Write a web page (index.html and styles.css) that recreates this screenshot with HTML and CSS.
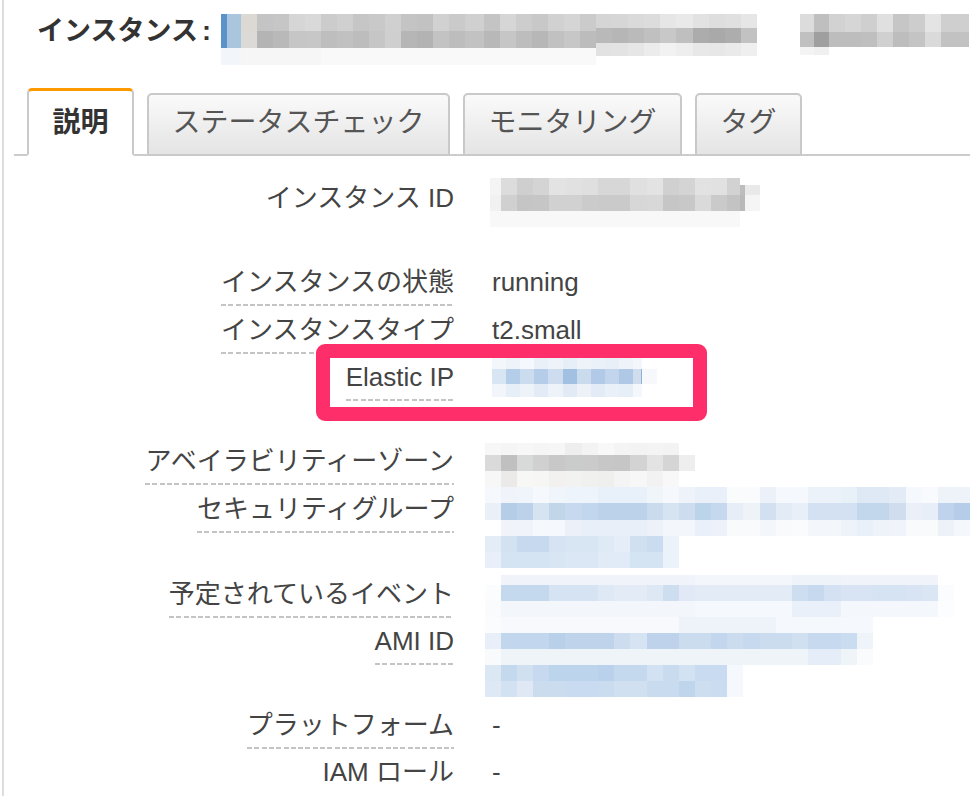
FILE: index.html
```html
<!DOCTYPE html>
<html lang="ja">
<head>
<meta charset="utf-8">
<title>インスタンス</title>
<link rel="stylesheet" href="styles.css">
</head>
<body>
<div class="page">
  <header class="title-bar">
    <h1 class="title">インスタンス<span class="colon">:</span></h1>
    <div class="mosaic m-title"></div>
  </header>
  <nav class="tabs">
    <div class="tab active">説明</div>
    <div class="tab">ステータスチェック</div>
    <div class="tab">モニタリング</div>
    <div class="tab">タグ</div>
  </nav>
  <section class="details">
    <div class="group">
      <div class="row">
        <div class="label"><span class="lbl">インスタンス ID</span></div>
        <div class="value"><div class="mosaic m-id"></div></div>
      </div>
    </div>
    <div class="group">
      <div class="row">
        <div class="label"><span class="lbl u">インスタンスの状態</span></div>
        <div class="value text">running</div>
      </div>
      <div class="row">
        <div class="label"><span class="lbl u">インスタンスタイプ</span></div>
        <div class="value text">t2.small</div>
      </div>
      <div class="row">
        <div class="label"><span class="lbl u">Elastic IP</span></div>
        <div class="value"><div class="mosaic m-eip"></div></div>
        <div class="highlight"></div>
      </div>
    </div>
    <div class="group">
      <div class="row">
        <div class="label"><span class="lbl u">アベイラビリティーゾーン</span></div>
        <div class="value"><div class="mosaic m-az"></div></div>
      </div>
      <div class="row row-sg">
        <div class="label"><span class="lbl u">セキュリティグループ</span></div>
        <div class="value"><div class="mosaic m-sg1"></div><div class="mosaic m-sg2"></div></div>
      </div>
      <div class="row">
        <div class="label"><span class="lbl u">予定されているイベント</span></div>
        <div class="value"><div class="mosaic m-ev"></div></div>
      </div>
      <div class="row row-ami">
        <div class="label"><span class="lbl u">AMI ID</span></div>
        <div class="value"><div class="mosaic m-ami1"></div><div class="mosaic m-ami2"></div></div>
      </div>
      <div class="row">
        <div class="label"><span class="lbl u">プラットフォーム</span></div>
        <div class="value text">-</div>
      </div>
      <div class="row">
        <div class="label"><span class="lbl">IAM ロール</span></div>
        <div class="value text">-</div>
      </div>
    </div>
  </section>
</div>
</body>
</html>
```

FILE: styles.css
```css
* { box-sizing: border-box; }
html, body { margin: 0; padding: 0; background: #fff; overflow: hidden; }
body {
  font-family: "Liberation Sans", "Noto Sans CJK JP", sans-serif;
  color: #444;
}
.page {
  margin-left: 2px;
  border-left: 2px solid #dddddd;
  height: 796px;
  overflow: hidden;
}

/* header */
.title-bar {
  display: flex;
  align-items: flex-start;
  height: 88px;
  padding: 13px 0 0 33px;
}
.title {
  margin: 0;
  font-size: 27px;
  font-weight: bold;
  line-height: 36px;
  color: #333;
  white-space: nowrap;
}
.colon { margin-left: 4px; }
.mosaic { flex: none; }
.m-title {
  width: 748px;
  height: 51px;
  margin: 1px 0 0 10px;
  background:
    linear-gradient(90deg, #5b93c9 0 6px, #aac6df 6px 20px, #dcd9d5 20px 36px, #c4c4c4 36px 52px, #c6c6c6 52px 68px, #d6d6d6 68px 84px, #d9d9d9 84px 100px, #cccccc 100px 116px, #d0d0d0 116px 132px, #c6c6c6 132px 148px, #c9c9c9 148px 164px, #d0d0d0 164px 180px, #c4c4c4 180px 196px, #c2c2c2 196px 212px, #d1d1d1 212px 228px, #cacaca 228px 244px, #d0d0d0 244px 263px, #c4c4c4 263px 279px, #d6d6d6 279px 295px, #cdcdcd 295px 311px, #c8c8c8 311px 327px, #d1d1d1 327px 343px, #d5d5d5 343px 359px, #cbcbcb 359px 375px) 0 0 / 375px 17px no-repeat,
    linear-gradient(90deg, #5b93c9 0 6px, #aac6df 6px 20px, #dcdad7 20px 36px, #b4b4b4 36px 52px, #b9b9b9 52px 68px, #c6c6c6 68px 84px, #c7c7c7 84px 100px, #bebebe 100px 116px, #c1c1c1 116px 132px, #bdbdbd 132px 148px, #c6c6c6 148px 164px, #cfcfcf 164px 180px, #b6b6b6 180px 196px, #b3b3b3 196px 212px, #c3c3c3 212px 228px, #bdbdbd 228px 244px, #c2c2c2 244px 263px, #b8b8b8 263px 279px, #c6c6c6 279px 295px, #bdbdbd 295px 311px, #b7b7b7 311px 327px, #c1c1c1 327px 343px, #c7c7c7 343px 359px, #bcbcbc 359px 375px) 0 17px / 375px 17px no-repeat,
    linear-gradient(90deg, #f2f6fb 0 20px, #f6f6f6 20px 100px, #f9f9f9 100px 375px) 0 34px / 375px 17px no-repeat,
    linear-gradient(90deg, #d5d5d5 0 16px, #d6d6d6 16px 32px, #dadada 32px 48px, #dcdcdc 48px 64px, #e6e6e6 64px 80px, #e9e9e9 80px 97px, #e2e2e2 97px 113px, #dedede 113px 129px, #e0e0e0 129px 145px, #e6e6e6 145px 161px) 375px 0 / 161px 14px no-repeat,
    linear-gradient(90deg, #b9b9b9 0 16px, #b6b6b6 16px 32px, #bababa 32px 48px, #c0c0c0 48px 64px, #c8c8c8 64px 80px, #bfbfbf 80px 97px, #acacac 97px 113px, #a9a9a9 113px 129px, #adadad 129px 145px, #c2c2c2 145px 161px) 375px 14px / 161px 15px no-repeat,
    linear-gradient(90deg, #e2e2e2 0 16px, #e3e3e3 16px 32px, #e6e6e6 32px 48px, #ececec 48px 64px, #f2f2f2 64px 80px, #eeeeee 80px 97px, #e8e8e8 97px 113px, #e7e7e7 113px 129px, #eaeaea 129px 145px, #efefef 145px 161px) 375px 29px / 161px 13px no-repeat,
    linear-gradient(90deg, #dcdcdc 0 14px, #bfbfbf 14px 29px, #d2d2d2 29px 45px, #d6d6d6 45px 61px, #cfcfcf 61px 77px, #e0e0e0 77px 93px, #c6c6c6 93px 109px, #cdcdcd 109px 125px, #e4e4e4 125px 141px, #cfcfcf 141px 169px) 579px 0 / 169px 18px no-repeat,
    linear-gradient(90deg, #c0c0c0 0 14px, #9f9f9f 14px 29px, #bdbdbd 29px 45px, #bdbdbd 45px 61px, #bfbfbf 61px 77px, #d0d0d0 77px 93px, #bdbdbd 93px 109px, #c4c4c4 109px 125px, #dadada 125px 141px, #c2c2c2 141px 169px) 579px 18px / 169px 15px no-repeat,
    linear-gradient(90deg, #f4f4f4 0 14px, #f0f0f0 14px 29px) 579px 33px / 29px 8px no-repeat;
}

/* tabs */
.tabs {
  display: flex;
  align-items: flex-end;
  gap: 13px;
  margin-left: 10px;
  padding-left: 13px;
  border-bottom: 2px solid #cccccc;
}
.tab {
  font-size: 28px;
  line-height: 36px;
  color: #555;
  padding: 10px 23.5px 13px;
  border: 2px solid #c9c9c9;
  border-radius: 5px 5px 0 0;
  background: linear-gradient(#fafafa, #e4e4e4);
  margin-bottom: -2px;
  white-space: nowrap;
}
.tab.active {
  padding-top: 14px;
  border-top: 3px solid #ff9900;
  border-bottom-color: #fff;
  background: #fff;
  color: #333;
  font-weight: bold;
}

/* details */
.details {
  display: flex;
  flex-direction: column;
  gap: 42px;
  padding-top: 24px;
}
.group {
  display: flex;
  flex-direction: column;
  gap: 5.5px;
}
.row {
  position: relative;
  display: grid;
  grid-template-columns: 450px 1fr;
  column-gap: 31px;
  height: 42px;
}
.row-sg { height: 79.5px; }
.row-ami { height: 78px; }
.label {
  display: flex;
  justify-content: flex-end;
  align-items: flex-start;
}
.lbl {
  font-size: 26px;
  line-height: 36px;
  padding-bottom: 6px;
  color: #444;
  white-space: nowrap;
}
.lbl.u {
  background: repeating-linear-gradient(90deg, #c4c4c4 0 5px, transparent 5px 7.3px) left bottom / 100% 2px no-repeat;
}
.value { min-width: 0; }
.value.text {
  font-size: 26px;
  line-height: 36px;
  padding-left: 7px;
  color: #444;
}

.highlight {
  position: absolute;
  left: 312px;
  top: -15px;
  width: 391px;
  height: 77px;
  border: 14px solid #fe2e6b;
  border-radius: 9px;
}

/* pixelated (redacted) values */
.m-id {
  width: 270px;
  height: 49px;
  margin: -2px 0 0 5px;
  background:
    linear-gradient(90deg, #f4f4f4 0 11px, #dcdcdc 11px 27px, #cfcfcf 27px 43px, #d4d4d4 43px 59px, #e3e3e3 59px 76px, #e1e1e1 76px 92px, #dfdfdf 92px 108px, #d7d7d7 108px 140px, #e0e0e0 140px 157px, #e3e3e3 157px 173px, #d0d0d0 173px 189px, #d4d4d4 189px 205px, #e2e2e2 205px 221px, #e1e1e1 221px 237px, #d2d2d2 237px 250px, transparent 250px) 0 0 / 270px 17px no-repeat,
    linear-gradient(90deg, #bdbdbd 0 5px, #e9e9e9 5px 20px) 250px 7px / 20px 10px no-repeat,
    linear-gradient(90deg, #f1f1f1 0 11px, #d0d0d0 11px 27px, #c5c5c5 27px 43px, #c6c6c6 43px 59px, #d1d1d1 59px 92px, #cbcbcb 92px 108px, #cacaca 108px 140px, #d7d7d7 140px 157px, #d8d8d8 157px 173px, #c6c6c6 173px 189px, #c8c8c8 189px 205px, #dadada 205px 221px, #cacaca 221px 237px, #c3c3c3 237px 250px, #b9b9b9 250px 255px, #f5f5f5 255px 270px) 0 17px / 270px 16px no-repeat,
    linear-gradient(90deg, #f8f8f8 0 250px, transparent 250px) 0 33px / 270px 16px no-repeat;
}
.m-eip {
  width: 165px;
  height: 39px;
  margin: -1px 0 0 7px;
  background:
    linear-gradient(90deg, #f3f7fb 0 14px, #eef3f9 14px 28px, #f5f8fc 28px 42px, #e9f0f7 42px 56px, #eef3f9 56px 71px, #e6eef7 71px 85px, #eef3f9 85px 99px, #eaf1f8 99px 113px, #e8eff7 113px 127px, #eef3f9 127px 141px, #f3f6fa 141px 150px, transparent 150px) 0 0 / 165px 11px no-repeat,
    linear-gradient(90deg, #d8e5f2 0 14px, #b4cde8 14px 28px, #cbdcef 28px 42px, #b5cde8 42px 56px, #cddcee 56px 71px, #a2c0e2 71px 85px, #cbdbee 85px 99px, #b2cae7 99px 113px, #c2d5ec 113px 127px, #aec8e6 127px 141px, #cfddef 141px 149px, #8fb2d8 149px 150px, #f6f8fb 150px 165px) 0 11px / 165px 15px no-repeat,
    linear-gradient(90deg, #f2f6fb 0 14px, #e6eef7 14px 28px, #eef3fa 28px 42px, #e3ecf6 42px 56px, #eef3fa 56px 71px, #e1eaf5 71px 85px, #edf2f9 85px 99px, #e3ebf6 99px 113px, #eaf0f8 113px 127px, #e6eef7 127px 141px, #f4f7fb 141px 150px, transparent 150px) 0 26px / 165px 13px no-repeat;
}
.m-az {
  width: 210px;
  height: 44px;
  background:
    linear-gradient(90deg, #f7f7f7 0 16px, #f5f5f5 16px 32px, #f7f7f7 32px 48px, #f5f5f5 48px 64px, #f6f6f6 64px 80px, #eeeeee 80px 97px, #f3f3f3 97px 113px, #f8f8f8 113px 129px, #f4f4f4 129px 145px, #f3f3f3 145px 162px, #f4f4f4 162px 178px, #f3f3f3 178px 194px, transparent 194px) 0 0 / 210px 12px no-repeat,
    linear-gradient(90deg, #dadada 0 16px, #c0c0c0 16px 32px, #d8d9d9 32px 48px, #d0d0d0 48px 64px, #c8c8c8 64px 80px, #cacbcb 80px 97px, #cbcbcb 97px 113px, #c7c7c7 113px 129px, #c6c6c6 129px 145px, #d3d3d3 145px 162px, #e3e3e3 162px 178px, #d5d5d5 178px 194px, #eeeeee 194px 210px) 0 12px / 210px 16px no-repeat,
    linear-gradient(90deg, #f7f7f7 0 16px, #ebeae8 16px 32px, #f7f7f6 32px 48px, #f6f6f5 48px 64px, #f2f1f0 64px 80px, #f2f2f1 80px 97px, #f0f0ef 97px 113px, #efefee 113px 129px, #f4f4f4 129px 145px, #f7f7f7 145px 162px, #f3f2f2 162px 178px, #f8f8f8 178px 194px, transparent 194px) 0 28px / 210px 16px no-repeat;
}
.m-sg1 {
  width: 485px;
  height: 49px;
  margin-top: -4px;
  background:
    linear-gradient(90deg, #f5f8fc 0 16px, #f0f4fa 16px 32px, #f0f5fb 32px 48px, #f5f8fd 48px 64px, #f0f5fb 64px 80px, #eef4fc 80px 113px, #e8f0f9 113px 162px, #f0f5fa 162px 178px, #f5f9fd 178px 194px, #eef3fa 194px 210px, #e9f0f9 210px 242px, #f9fbfd 242px 275px, #ecf1f9 275px 291px, #f5f8fc 291px 323px, #ecf2f9 323px 356px, #e8f0f8 356px 372px, #dfe9f5 372px 404px, #e3ebf6 404px 421px, #f5f8fc 421px 437px, #f8fafd 437px 453px, #eef3f9 453px 485px) 0 0 / 485px 16px no-repeat,
    linear-gradient(90deg, #eaf0f8 0 16px, #b6cde8 16px 32px, #bcd1ea 32px 48px, #d6e3f1 48px 64px, #c2d6ea 64px 80px, #c6d9ee 80px 97px, #c2d7ed 97px 113px, #bcd2ea 113px 162px, #cbdbee 162px 178px, #d6e3f1 178px 194px, #cddcee 194px 210px, #bcd4ea 210px 226px, #c6d8ee 226px 242px, #e8eef7 242px 258px, #eef3f7 258px 275px, #d3e0f1 275px 291px, #e3ebf6 291px 307px, #e8eff8 307px 323px, #d3e1f2 323px 372px, #c2d6ec 372px 404px, #d0ddee 404px 421px, #ebf0f8 421px 437px, #e7eef8 437px 453px, #bfd4ec 453px 469px, #b5cde8 469px 485px) 0 16px / 485px 17px no-repeat,
    linear-gradient(90deg, #ffffff 0 16px, #f0f4fa 16px 48px, #f5f8fc 48px 80px, #ebf0f9 80px 97px, #e8eff8 97px 162px, #edf2f9 162px 178px, #f3f6fb 178px 210px, #eaf0f9 210px 226px, #edf2fa 226px 242px, #f8fafc 242px 275px, #f3f6fb 275px 291px, #f8fafc 291px 307px, #fafbfd 307px 323px, #f3f6fb 323px 356px, #eef3fa 356px 372px, #eaf0f9 372px 388px, #eef3fa 388px 404px, #f0f4fa 404px 421px, #f8fafc 421px 453px, #edf2f9 453px 469px, #f4f7fb 469px 485px) 0 33px / 485px 16px no-repeat;
}
.m-sg2 {
  width: 194px;
  height: 32px;
  background:
    linear-gradient(90deg, #e4ecf6 0 16px, #d3e2f1 16px 32px, #c6d9ef 32px 64px, #d6e3f2 64px 80px, #d8e5f2 80px 113px, #deeaf6 113px 129px, #e4edf8 129px 145px, #d0e0f1 145px 162px, #cadcef 162px 178px, #ecf2fa 178px 194px) 0 0 / 194px 16px no-repeat,
    linear-gradient(90deg, #e8eff8 0 16px, #d5e4f2 16px 64px, #d8e6f3 64px 80px, #dbe7f4 80px 113px, #e0ebf7 113px 145px, #d4e4f2 145px 178px, #ecf2fa 178px 194px) 0 16px / 194px 16px no-repeat;
}
.m-ev {
  width: 469px;
  height: 42px;
  margin-top: -1px;
  background:
    linear-gradient(90deg, #ffffff 0 16px, #f0f4fa 16px 210px, #f3f6fb 210px 307px, #eef3fa 307px 356px, #f0f4fa 356px 453px, transparent 453px) 0 0 / 469px 10px no-repeat,
    linear-gradient(90deg, #fbfcfe 0 16px, #c5d9ee 16px 64px, #d5e3f2 64px 113px, #dfe8f5 113px 129px, #e3ebf6 129px 162px, #dde8f4 162px 178px, #cddef0 178px 194px, #e0e9f5 194px 210px, #e3ebf6 210px 307px, #cddef0 307px 323px, #c6d9ef 323px 339px, #d3e1f2 339px 356px, #d8e4f3 356px 388px, #d6e3f2 388px 421px, #d8e4f3 421px 437px, #dae6f4 437px 453px, #fafcfe 453px 469px) 0 10px / 469px 16px no-repeat,
    linear-gradient(90deg, #fafbfd 0 16px, #f3f6fb 16px 210px, #f5f8fc 210px 307px, #eaf0f9 307px 356px, #f4f7fb 356px 453px, #fcfdfe 453px 469px) 0 26px / 469px 16px no-repeat;
}
.m-ami1 {
  width: 388px;
  height: 48px;
  margin-top: -6px;
  background:
    linear-gradient(90deg, #fbfcfe 0 16px, #f7f9fc 16px 194px, #eef3fa 194px 291px, #f5f8fc 291px 388px) 0 0 / 388px 16px no-repeat,
    linear-gradient(90deg, #e8eff8 0 16px, #c2d6ed 16px 64px, #b9d0ea 64px 80px, #bfd3eb 80px 129px, #cddcee 129px 145px, #d6e3f2 145px 162px, #bed3eb 162px 194px, #cbdcef 194px 226px, #c2d7ee 226px 242px, #cbdcef 242px 258px, #c6d9ee 258px 275px, #cbdcef 275px 307px, #d1e0f1 307px 323px, #c6d9ee 323px 356px, #cadcf0 356px 372px, #eff4fa 372px 388px) 0 16px / 388px 16px no-repeat,
    linear-gradient(90deg, #f9fafc 0 16px, #eff4f9 16px 323px, #e5edf8 323px 356px, #eff4f9 356px 372px, #fafbfd 372px 388px) 0 32px / 388px 16px no-repeat;
}
.m-ami2 {
  width: 258px;
  height: 32px;
  background:
    linear-gradient(90deg, #dce7f4 0 16px, #c5d9ee 16px 32px, #d0e0f1 32px 48px, #c6d9ef 48px 64px, #bcd4ec 64px 113px, #b9d1eb 113px 129px, #c4d8ee 129px 162px, #d3e2f2 162px 178px, #c8dbef 178px 194px, #d3e2f3 194px 210px, #c8dbf0 210px 242px, #f5f8fc 242px 258px) 0 0 / 258px 16px no-repeat,
    linear-gradient(90deg, #dfe9f5 0 16px, #d3e2f2 16px 32px, #dfe8f4 32px 48px, #cbdcef 48px 80px, #c8dbf0 80px 113px, #cadcef 113px 129px, #d1e0f1 129px 162px, #c8dbef 162px 194px, #bfd5ec 194px 210px, #cddef0 210px 226px, #cbdcf0 226px 242px, #f5f8fc 242px 258px) 0 16px / 258px 16px no-repeat;
}
```
